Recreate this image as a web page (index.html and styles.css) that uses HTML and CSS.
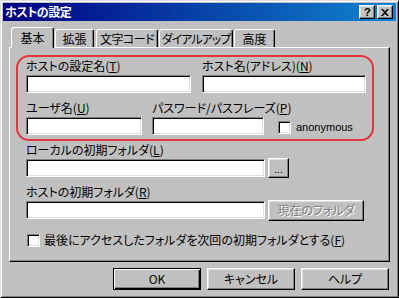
FILE: index.html
```html
<!DOCTYPE html>
<html lang="ja">

<head>
    <meta charset="UTF-8">
    <title>ホストの設定</title>
    <link rel="stylesheet" href="styles.css">
</head>

<body>
    <div class="window">
        <div class="titlebar">
            <span class="title">ホストの設定</span>
            <span class="tb-buttons">
                <span class="tb-btn tb-help">?</span>
                <span class="tb-btn">
                    <svg width="8" height="7" viewBox="0 0 8 7">
                        <path d="M0 0h2l2 2.2L6 0h2L5 3.5 8 7H6L4 4.8 2 7H0l3-3.5z" fill="#000"/>
                    </svg>
                </span>
            </span>
        </div>

        <div class="tabs">
            <span class="tab active">基本</span>
            <span class="tab t-ext">拡張</span>
            <span class="tab t-code">文字コード</span>
            <span class="tab t-dial">ダイアルアップ</span>
            <span class="tab t-adv">高度</span>
        </div>

        <div class="panel">
            <div class="group">
                <div class="row">
                    <div class="field w-setname">
                        <div class="label">ホストの設定名(<u>T</u>)</div>
                        <div class="edit"></div>
                    </div>
                    <div class="field w-host">
                        <div class="label">ホスト名(アドレス)(<u>N</u>)</div>
                        <div class="edit"></div>
                    </div>
                </div>
                <div class="row row-2">
                    <div class="field w-user">
                        <div class="label">ユーザ名(<u>U</u>)</div>
                        <div class="edit"></div>
                    </div>
                    <div class="field w-pass">
                        <div class="label">パスワード/パスフレーズ(<u>P</u>)</div>
                        <div class="edit"></div>
                    </div>
                    <div class="check anon">
                        <span class="box"></span>
                        <span class="check-text latin">anonymous</span>
                    </div>
                </div>
            </div>

            <div class="block">
                <div class="label">ローカルの初期フォルダ(<u>L</u>)</div>
                <div class="line">
                    <div class="edit w-folder"></div>
                    <span class="btn btn-browse">...</span>
                </div>
            </div>

            <div class="block block-2">
                <div class="label">ホストの初期フォルダ(<u>R</u>)</div>
                <div class="line">
                    <div class="edit w-folder"></div>
                    <span class="btn btn-current disabled">現在のフォルダ</span>
                </div>
            </div>

            <div class="check last">
                <span class="box"></span>
                <span class="check-text">最後にアクセスしたフォルダを次回の初期フォルダとする(<u>F</u>)</span>
            </div>
        </div>

        <div class="buttons">
            <span class="btn btn-dlg default">OK</span>
            <span class="btn btn-dlg">キャンセル</span>
            <span class="btn btn-dlg">ヘルプ</span>
        </div>
    </div>
</body>

</html>
```

FILE: styles.css
```css
* {
    padding: 0;
    margin: 0;
    box-sizing: border-box;
}

body {
    font: 12px/14px "Noto Sans CJK JP", "Liberation Sans", sans-serif;
    font-feature-settings: "palt";
    color: #000;
    background: #c0c0c0;
}

u {
    text-decoration: underline;
    text-underline-offset: 1px;
}

.window {
    width: 399px;
    height: 298px;
    padding: 2px;
    background: #c0c0c0;
    border: 1px solid;
    border-color: #dfdfdf #000 #000 #dfdfdf;
    box-shadow: inset 1px 1px #fff, inset -1px -1px #808080;
}

/* title bar */
.titlebar {
    height: 18px;
    display: flex;
    align-items: center;
    justify-content: space-between;
    padding: 0 3px 0 2px;
    background: linear-gradient(to right, #000080, #1084d0);
    color: #fff;
    font-weight: bold;
    letter-spacing: -0.5px;
}

.tb-buttons {
    display: flex;
    gap: 2px;
}

.tb-btn {
    width: 16px;
    height: 14px;
    display: flex;
    align-items: center;
    justify-content: center;
    background: #c0c0c0;
    border: 1px solid;
    border-color: #fff #000 #000 #fff;
    box-shadow: inset -1px -1px #808080, inset 1px 1px #dfdfdf;
}

.tb-help {
    color: #000;
    font: bold 11px/12px "Liberation Sans", sans-serif;
}

/* tabs */
.tabs {
    display: flex;
    align-items: flex-end;
    height: 20px;
    margin-top: 6px;
    padding-left: 8px;
    position: relative;
    z-index: 1;
}

.tab {
    height: 18px;
    padding-top: 2px;
    margin-right: 1px;
    text-align: center;
    white-space: nowrap;
    border: 1px solid;
    border-bottom: none;
    border-color: #fff #000 transparent #fff;
    border-radius: 3px 3px 0 0;
    box-shadow: inset -1px 0 #808080;
}

.tab.active {
    width: 43px;
    height: 21px;
    margin-right: 1px;
    margin-bottom: -1px;
    padding-top: 3px;
    background: #c0c0c0;
}

.t-ext { width: 39px; margin-right: 2px; }
.t-code { width: 62px; letter-spacing: -0.5px; }
.t-dial { width: 74px; letter-spacing: -1px; }
.t-adv { width: 41px; }

/* tab page */
.panel {
    width: 381px;
    height: 215px;
    margin-left: 6px;
    border: 1px solid;
    border-color: #fff #000 #000 #fff;
    box-shadow: inset -1px -1px #808080;
}

.group {
    width: 358px;
    height: 86px;
    margin: 7px 0 0 6px;
    padding: 2px 0 0 8px;
    border: 2px solid #e2353d;
    border-radius: 13px;
}

.row {
    display: flex;
    gap: 11px;
}

.row-2 {
    margin-top: 8px;
    align-items: flex-end;
}

.row-2 .w-pass {
    margin-left: -1px;
}

.w-setname { width: 165px; }
.w-host { width: 164px; }
.w-user { width: 116px; }
.w-pass { width: 112px; }
.w-folder { width: 239px; }

.label {
    height: 14px;
    white-space: nowrap;
}

.edit {
    height: 18px;
    margin-top: 2px;
    background: #fff;
    border: 1px solid;
    border-color: #808080 #fff #fff #808080;
    box-shadow: inset 1px 1px #000, inset -1px -1px #dfdfdf;
}

.check {
    display: flex;
    align-items: center;
    white-space: nowrap;
}

.box {
    width: 13px;
    height: 13px;
    background: #fff;
    border: 1px solid;
    border-color: #808080 #fff #fff #808080;
    box-shadow: inset 1px 1px #000, inset -1px -1px #dfdfdf;
}

.check-text {
    margin-left: 4px;
}

.latin {
    font-family: "Liberation Sans", sans-serif;
    font-size: 11px;
}

.anon {
    margin-left: 3px;
    margin-bottom: 1px;
}

.anon .check-text {
    margin-left: 5px;
}

.block {
    margin: 2px 0 0 16px;
}

.block .edit {
    margin-top: 0;
}

.line {
    display: flex;
    align-items: center;
    margin-top: 2px;
    height: 18px;
}

.block-2 {
    margin-top: 8px;
}

.last {
    margin: 14px 0 0 17px;
}

/* buttons */
.btn {
    display: flex;
    align-items: center;
    justify-content: center;
    background: #c0c0c0;
    border: 1px solid;
    border-color: #fff #000 #000 #fff;
    box-shadow: inset -1px -1px #808080, inset 1px 1px #dfdfdf;
    white-space: nowrap;
}

.btn-browse {
    width: 21px;
    height: 20px;
    margin-left: 3px;
    font-size: 10px;
    line-height: 10px;
    padding-top: 2px;
}

.btn-current {
    width: 96px;
    height: 21px;
    margin-left: 3px;
}

.disabled {
    color: #808080;
    text-shadow: 1px 1px #fff;
}

.buttons {
    display: flex;
    justify-content: flex-end;
    gap: 6px;
    margin-top: 6px;
    padding-right: 7px;
}

.btn-dlg {
    width: 88px;
    height: 22px;
}

.btn-dlg.default {
    border-color: #000;
    box-shadow: inset 1px 1px #fff, inset -1px -1px #000, inset -2px -2px #808080;
}
```
